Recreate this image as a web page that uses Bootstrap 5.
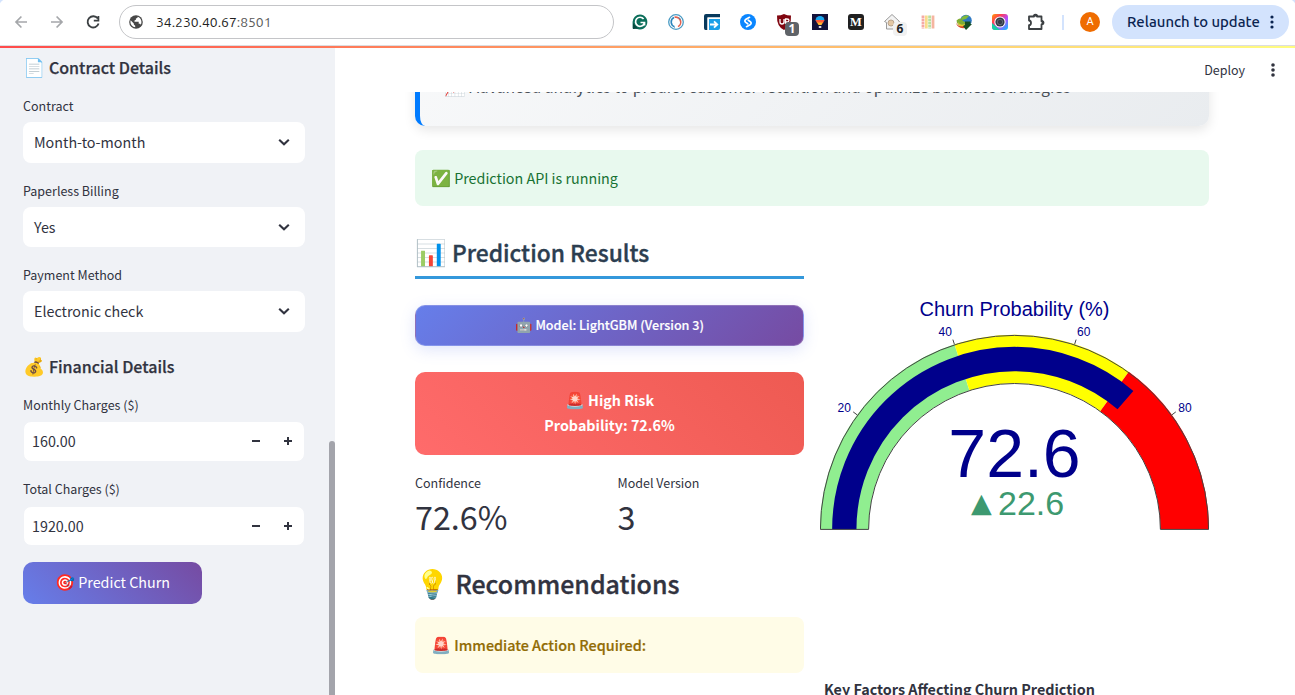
<!DOCTYPE html>
<html lang="en">
<head>
<meta charset="utf-8">
<meta name="viewport" content="width=device-width, initial-scale=1">
<title>Customer Churn Prediction</title>
<link href="https://cdn.jsdelivr.net/npm/bootstrap@5.3.0/dist/css/bootstrap.min.css" rel="stylesheet">
<style>
  body { font-family: "Noto Sans CJK SC", sans-serif; font-size: 14.32px; line-height: 24px; color: #31333f; height: 695px; background: #fff; }
  .emo { font-family: "Noto Color Emoji", "Noto Sans CJK SC", sans-serif; font-weight: 400; font-size: 1.12em; line-height: 0; -webkit-text-stroke: 0; }
  .browser-bar { height: 45px; font-family: Ubuntu, "Noto Sans", sans-serif; background: radial-gradient(circle at 100% 100%, #fff 6px, #d3e3fd 7px) 0 0 / 6px 6px no-repeat, radial-gradient(circle at 0 100%, #fff 6px, #d3e3fd 7px) 100% 0 / 6px 6px no-repeat #fff; }
  .nav-cell { width: 36px; height: 24px; margin-top: -1px; }
  .url-box { width: 495px; height: 34px; border: 1px solid #c4c5c8; border-radius: 17px; margin-left: 8px; margin-top: -1px; padding-left: 9px; font-size: 13.9px; color: #1f1f1f; }
  .url-box span span { color: #5a5a5a; }
  .ext-row { margin-left: 8px; }
  .tally { right: 3px; top: 12px; width: 14px; height: 14px; border-radius: 4px; font: 700 12px/14px "Noto Sans", sans-serif; }
  .tally-dark { background: #5f6368; color: #fff; }
  .tally-light { background: #f1f1f1; color: #202124; }
  .split-line { width: 2px; height: 15px; background: #d3e3fd; margin: 0 16px 0 8px; }
  .avatar { width: 20px; height: 20px; background: #ef6c00; color: #fff; font: 11px/20px Roboto, sans-serif; margin-top: -1px; }
  .relaunch { width: 177px; height: 34px; background: #d3e3fd; color: #0a2450; font-size: 14.9px; font-weight: 500; margin-left: 12px; margin-top: -1px; padding: 0 15px 0 15px; }
  .page-line { height: 3px; border-top: 1px solid #dcdde0; background: linear-gradient(90deg, #ff4b4b, #fffd80); }
  .side-panel { width: 335px; height: 647px; background: #f0f2f6; padding: 0 30px 0 23px; }
  .thumb { right: 0; top: 393px; width: 6px; height: 260px; background: #a3a4ab; border-radius: 4px; }
  .side-head { font-size: 16px; line-height: 38px; padding-bottom: 2px; font-weight: 500; white-space: nowrap; -webkit-text-stroke: .25px; }
  .field-label { font-size: 12.5px; line-height: 20px; }
  .pick { background: #fff; border-radius: 8px; padding: 0 14px 1px 11px; height: 41px; }
  .pick-s { height: 40px; padding-bottom: 0; }
  .stepper { border: 1px solid #f0f2f6; padding-right: 10px; padding-left: 8px; }
  .predict { width: 179px; height: 42px; border-radius: 10px; background: linear-gradient(45deg, #667eea, #764ba2); color: #fff; margin-top: 16px; padding-bottom: 2px; }
  .app-bar { height: 44px; padding-right: 16px; font-size: 12.5px; }
  .scroll-area { height: 603px; padding: 0 86px 0 80px; }
  .intro { height: 94px; margin-top: -60px; border-left: 5px solid #007bff; border-radius: 10px; background: linear-gradient(135deg, #f8f9fa, #e9ecef); box-shadow: 0 4px 12px rgba(0,0,0,.1); padding: 43px 0 0 24px; color: #495057; font-size: 15.74px; white-space: nowrap; }
  .note { height: 56px; border-radius: 8px; padding-left: 16px; }
  .note-ok { background: #e8f9ee; color: #177233; margin-top: 24px; }
  .note-warn { background: #fffce7; color: #926c05; font-weight: 500; font-size: 14.4px; -webkit-text-stroke: .2px; }
  .result-col { width: 389px; }
  .results-title { height: 46px; line-height: 40px; margin: 27px 0 0; border-bottom: 3px solid #3498db; font-size: 22.8px; font-weight: 500; color: #2c3e50; -webkit-text-stroke: .35px; }
  .model-tag { height: 41px; margin-top: 26px; padding-bottom: 1px; border: 1px solid rgba(255,255,255,.2); border-radius: 10px; background: linear-gradient(135deg, #667eea, #764ba2); box-shadow: 0 4px 15px rgba(102,126,234,.2); color: #fff; font-size: 12.6px; font-weight: 500; -webkit-text-stroke: .15px; }
  .risk { height: 83px; margin-top: 26px; padding-bottom: 3px; border-radius: 10px; background: linear-gradient(45deg, #ff6b6b, #ee5a52); color: #fff; font-weight: 700; line-height: 25px; }
  .metric-num { font-size: 32.3px; line-height: 46px; margin-bottom: 4px; }
  .rec-title { font-size: 24.95px; line-height: 40px; font-weight: 500; margin: 20px 0 14px; -webkit-text-stroke: .35px; }
  .gauge { margin-top: 86px; }
  .factors { font-weight: 700; font-size: 14.36px; margin: 137px 0 0 4px; }
</style>
</head>
<body class="overflow-hidden">
<header class="browser-bar d-flex align-items-center">
  <div class="d-flex" style="padding-left:3px">
    <span class="nav-cell d-flex align-items-center justify-content-center"><svg width="14" height="14" fill="none" stroke="#a5a7aa" stroke-width="1.7"><path d="M13 7H2M7.400 1.500 2 7 7.400 12.500"/></svg></span>
    <span class="nav-cell d-flex align-items-center justify-content-center"><svg width="14" height="14" fill="none" stroke="#a5a7aa" stroke-width="1.7"><path d="M1 7h11M6.600 1.500 12 7 6.600 12.500"/></svg></span>
    <span class="nav-cell d-flex align-items-center justify-content-center"><svg width="16" height="16" fill="none" stroke="#3c4043" stroke-width="1.8"><path d="M12.800 4.600A5.600 5.600 0 1 0 13.600 9.500M13.400 2v4.600H8.800"/></svg></span>
  </div>
  <div class="url-box d-flex align-items-center" style="gap:13px">
    <svg width="14" height="14" viewBox="0 0 14 14"><circle cx="7" cy="7" r="6.8" fill="#474747"/><path d="M1.6 5.2 4.8 8.4v1l1.4 1.4v1.5C3.4 12 1.5 9.600 1.400 7ZM8.700 1.700C8.700 3 7.800 3.400 6.900 3.400v1.300L5.500 5.400v1.300h4.200v2.100h1.400l.7 1c1.700-3 .2-7-3.100-8.100Z" fill="#fff"/></svg>
    <span>34.230.40.67<span>:8501</span></span>
  </div>
  <div class="ext-row d-flex">
    <span class="nav-cell d-flex align-items-center justify-content-center"><svg width="16" height="16"><path d="M8 .5A7.500 7.500 0 1 1 1.500 12L.6 15.200V8A7.500 7.500 0 0 1 8 .5Z" fill="#0b6e5a"/><path d="M1 9v6l5-.3Z" fill="#06483f"/><path d="M11.600 5A4.500 4.500 0 1 0 12.300 9.200M8.500 8.500h4v3" fill="none" stroke="#fff" stroke-width="1.700"/></svg></span>
    <span class="nav-cell d-flex align-items-center justify-content-center"><svg width="16" height="16" fill="none"><circle cx="8" cy="8" r="7.300" stroke="#4a9bc4" stroke-width="1.300"/><path d="M6 3.500a5 5 0 0 0 .5 9.200" stroke="#2b86bd" stroke-width="1.600"/><path d="M6.500 3.300A5 5 0 0 1 10 12.600" stroke="#e2604e" stroke-width="1.600"/><path d="m4 11 2.500 2.500M11 3.500l1.500 2" stroke="#2b86bd"/></svg></span>
    <span class="nav-cell d-flex align-items-center justify-content-center"><svg width="16" height="16"><path d="M2 0h14v3.500H3.500V16H1.500Q0 16 0 14V2Q0 0 2 0Z" fill="#08395c"/><path d="M3.500 3.500H16V5H5v11H3.500Z" fill="#fff"/><path d="M5 5h11v9q0 2-2 2H5Z" fill="#1a9fe8"/><path d="M6 10.500h7M10 7.400l3.300 3.100-3.300 3.100" fill="none" stroke="#fff" stroke-width="1.800"/></svg></span>
    <span class="nav-cell d-flex align-items-center justify-content-center"><svg width="16" height="16"><circle cx="8" cy="8" r="8" fill="#0a86ff"/><path d="M9.500 3.300 6 5.200q-2 1.500-.5 3l2.200 1.600M6.500 12.700l3.500-1.900q2-1.500.5-3L8.300 6.200" fill="none" stroke="#fff" stroke-width="1.700" stroke-linecap="round"/></svg></span>
    <span class="nav-cell d-flex align-items-center justify-content-center position-relative"><svg width="16" height="16"><path d="M8 0Q11 1.500 15 1.500q.5 11-7 14.500Q.5 12.500 1 1.500 5 1.500 8 0Z" fill="#800610"/><path d="M4 5v3q0 2 2 2t2-2V5m1.500 5V5h1.500q2 0 2 1.500T11 8H9.500" fill="none" stroke="#fff" stroke-width="1.300"/></svg><span class="tally tally-dark position-absolute text-center">1</span></span>
    <span class="nav-cell d-flex align-items-center justify-content-center"><svg width="16" height="16"><path d="M0 0h16v16H0z" fill="#12113a"/><path d="M3.500 6.500a4.500 4.500 0 0 1 9 0Z" fill="#1aa7ee"/><path d="M3.500 6h9l-1.500 3H5Z" fill="#ff5b3a"/><path d="M5 8.500h6L9.500 11h-3Z" fill="#ffb52b"/><path d="M6.800 12h2.500v2H6.800z" fill="#d8d8e4"/></svg></span>
    <span class="nav-cell d-flex align-items-center justify-content-center"><svg width="16" height="16"><rect width="16" height="16" rx="3" fill="#202020"/><text x="8" y="12.200" text-anchor="middle" font-family="Liberation Serif, serif" font-weight="700" font-size="12.500" fill="#fff">M</text></svg></span>
    <span class="nav-cell d-flex align-items-center justify-content-center position-relative"><svg width="16" height="16" fill="#f3f3f3" stroke="#9a9a9a"><path d="m.5 7.500 7.500-7 7.500 7-1.500 1V15H2.500V8.500Z"/><circle cx="7" cy="9" r="3" fill="#e3c7a4" stroke="#b9a48c"/></svg><span class="tally tally-light position-absolute text-center">6</span></span>
    <span class="nav-cell d-flex align-items-center justify-content-center"><svg width="14" height="14" fill="none" stroke-width="2.800"><path d="M2 .5v13" stroke="#f5a9a4" stroke-dasharray="2.500 .5"/><path d="M5.300 .5v13" stroke="#f9dc8c"/><path d="M8.600 .5v13" stroke="#b9e0a0" stroke-dasharray="2.500 .5"/><path d="M12 .5v13" stroke="#f5b5a0"/></svg></span>
    <span class="nav-cell d-flex align-items-center justify-content-center"><svg width="16" height="16"><circle cx="10" cy="6.500" r="5.800" fill="#2e79c4"/><path d="M5 4q4-4 8-2l-3 3-4 1Z" fill="#82bb3a"/><path d="M.5 6.500q4-4 6 0l3 2-2 4Q1 12 .5 6.500Z" fill="#7fae35"/><path d="M2 8q2 4 7 2l-1 3Q2 13 2 8Z" fill="#eac62c"/><path d="M0 8q2 5.500 8 4l1 2Q1 15 0 8Z" fill="#d64b25"/><path d="M9 7.500h5.500V10H16l-6 6-3-4 2-1Z" fill="#174e20"/></svg></span>
    <span class="nav-cell d-flex align-items-center justify-content-center"><svg width="16" height="16"><defs><linearGradient id="rb" x2="1" y2="1"><stop stop-color="#ff9d00"/><stop offset=".3" stop-color="#ff3d55"/><stop offset=".6" stop-color="#b34cff"/><stop offset="1" stop-color="#00c8ff"/></linearGradient></defs><rect width="16" height="16" rx="3" fill="url(#rb)"/><path d="M0 9v4q0 3 3 3h5Z" fill="#16cfa5"/><circle cx="8" cy="8" r="5.600" fill="#fff"/><circle cx="8" cy="8" r="4.600" fill="#343a46"/><circle cx="8" cy="8" r="2.700" fill="none" stroke="#68717e" stroke-width=".8"/></svg></span>
    <span class="nav-cell d-flex align-items-center justify-content-center"><svg width="18" height="18" fill="none" stroke="#3c4043" stroke-width="1.800"><path d="M2 3.500h5a1.500 1.500 0 0 1 3 0H14.500v4.700a1.600 1.600 0 0 1 0 3.200V16H2v-3.800q2-.2 2-2.300T2 7.500Z" stroke-linejoin="round"/><path d="M7 2.600a1.700 1.700 0 0 1 3 0ZM15.500 8.200a1.600 1.600 0 0 1 0 3Z" fill="#3c4043"/></svg></span>
  </div>
  <span class="split-line"></span>
  <span class="avatar rounded-circle text-center">A</span>
  <div class="relaunch rounded-pill d-flex align-items-center justify-content-between text-nowrap"><span>Relaunch to update</span><svg width="4" height="16" fill="#0a2450"><circle cx="2" cy="3" r="1.600"/><circle cx="2" cy="8" r="1.600"/><circle cx="2" cy="13" r="1.600"/></svg></div>
</header>
<div class="page-line"></div>

<div class="d-flex">
  <aside class="side-panel position-relative flex-shrink-0 overflow-hidden">
    <div class="side-head"><span class="emo">📄</span> Contract Details</div>
    <div class="field-label" style="margin:8px 0 6px">Contract</div>
    <div class="pick d-flex align-items-center justify-content-between">Month-to-month <svg width="14" height="14" fill="none" stroke="#31333f" stroke-width="2.100"><path d="m2.200 4.700 4.800 4.600 4.800-4.600"/></svg></div>
    <div class="field-label" style="margin:18px 0 6px">Paperless Billing</div>
    <div class="pick pick-s d-flex align-items-center justify-content-between">Yes <svg width="14" height="14" fill="none" stroke="#31333f" stroke-width="2.100"><path d="m2.200 4.700 4.800 4.600 4.800-4.600"/></svg></div>
    <div class="field-label" style="margin:18px 0 6px">Payment Method</div>
    <div class="pick d-flex align-items-center justify-content-between">Electronic check <svg width="14" height="14" fill="none" stroke="#31333f" stroke-width="2.100"><path d="m2.200 4.700 4.800 4.600 4.800-4.600"/></svg></div>
    <div class="side-head" style="margin-top:15px"><span class="emo">💰</span> Financial Details</div>
    <div class="field-label" style="margin:8px 0 6px">Monthly Charges ($)</div>
    <div class="pick stepper d-flex align-items-center justify-content-between">160.00 <svg width="44" height="12" stroke="#31333f" stroke-width="2"><path d="M2 6h8M34 6h8M38 2v8"/></svg></div>
    <div class="field-label" style="margin:17px 0 7px">Total Charges ($)</div>
    <div class="pick pick-s stepper d-flex align-items-center justify-content-between">1920.00 <svg width="44" height="12" stroke="#31333f" stroke-width="2"><path d="M2 6h8M34 6h8M38 2v8"/></svg></div>
    <div class="predict d-flex align-items-center justify-content-center"><span><span class="emo">🎯</span> Predict Churn</span></div>
    <div class="thumb position-absolute"></div>
  </aside>

  <main class="flex-grow-1">
    <div class="app-bar d-flex align-items-center justify-content-end"><span>Deploy</span><svg style="margin-left:22px" width="12" height="16" fill="#31333f"><circle cx="6" cy="3" r="1.800"/><circle cx="6" cy="8" r="1.800"/><circle cx="6" cy="13" r="1.800"/></svg></div>
    <div class="scroll-area overflow-hidden">
      <div class="intro"><span class="emo">📈</span> Advanced analytics to predict customer retention and optimize business strategies</div>
      <div class="note note-ok d-flex align-items-center"><span><span class="emo">✅</span> Prediction API is running</span></div>
      <div class="d-flex gap-3">
        <section class="result-col">
          <h2 class="results-title"><span class="emo">📊</span> Prediction Results</h2>
          <div class="model-tag d-flex align-items-center justify-content-center"><span><span class="emo">🤖</span> Model: LightGBM (Version 3)</span></div>
          <div class="risk d-flex flex-column align-items-center justify-content-center"><span><span class="emo">🚨</span> High Risk</span><span>Probability: 72.6%</span></div>
          <div class="d-flex gap-3" style="margin-top:18px">
            <div class="w-50"><div class="field-label">Confidence</div><div class="metric-num">72.6%</div></div>
            <div class="w-50"><div class="field-label">Model Version</div><div class="metric-num">3</div></div>
          </div>
          <h2 class="rec-title"><span class="emo">💡</span> Recommendations</h2>
          <div class="note note-warn d-flex align-items-center"><span><span class="emo">🚨</span> Immediate Action Required:</span></div>
        </section>
        <section class="result-col">
          <svg class="gauge d-block" width="389" height="248" viewBox="0 0 389 248" font-family="Liberation Sans, Arial, sans-serif" fill="darkblue" text-anchor="middle">
            <g fill="none">
              <path d="M24.300 237.200a170.200 170.200 0 0 1 340.400 0" pathLength="100" stroke="lightgreen" stroke-width="48.600" stroke-dasharray="40 100"/>
              <path d="M24.300 237.200a170.200 170.200 0 0 1 340.400 0" pathLength="100" stroke="yellow" stroke-width="48.600" stroke-dasharray="0 40 30 100"/>
              <path d="M24.300 237.200a170.200 170.200 0 0 1 340.400 0" pathLength="100" stroke="red" stroke-width="48.600" stroke-dasharray="0 70 30 100"/>
              <path d="M24.300 237.200a170.200 170.200 0 0 1 340.400 0" pathLength="100" stroke="darkblue" stroke-width="24.300" stroke-dasharray="72.600 100"/>
              <path d="M.4 237.400a194.100 194.100 0 0 1 388.200 0h-48.200a145.900 145.900 0 0 0-291.800 0Z" stroke="#444"/>
              <path d="m37.200 122.900-4-3M134.400 52.300l-1.500-4.700M254.600 52.300l1.500-4.700M351.800 122.900l4-3" stroke="#444"/>
            </g>
            <text x="194.500" y="24" font-size="20">Churn Probability (%)</text>
            <g font-size="12"><text x="24.300" y="120">20</text><text x="125.300" y="44">40</text><text x="263.700" y="44">60</text><text x="365" y="120">80</text></g>
            <text x="194.500" y="185.300" font-size="68">72.6</text>
            <g fill="#3d9970" font-size="34"><text x="161.300" y="220" font-size="27" font-family="DejaVu Sans">▲</text><text x="178" y="223" text-anchor="start">22.6</text></g>
          </svg>
          <div class="factors">Key Factors Affecting Churn Prediction</div>
        </section>
      </div>
    </div>
  </main>
</div>
<script src="https://cdn.jsdelivr.net/npm/bootstrap@5.3.0/dist/js/bootstrap.bundle.min.js"></script>
</body>
</html>
